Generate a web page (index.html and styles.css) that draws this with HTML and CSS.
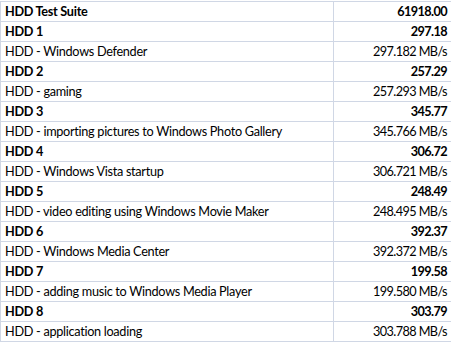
FILE: index.html
```html
<!DOCTYPE html>
<html>
<head>
<meta charset="utf-8">
<link rel="stylesheet" href="styles.css">
</head>
<body>
<div class="sheet">
  <div class="cell b">HDD Test Suite</div><div class="cell num b">61918.00</div>
  <div class="cell b">HDD 1</div><div class="cell num b">297.18</div>
  <div class="cell">HDD - Windows Defender</div><div class="cell num">297.182 MB/s</div>
  <div class="cell b">HDD 2</div><div class="cell num b">257.29</div>
  <div class="cell">HDD - gaming</div><div class="cell num">257.293 MB/s</div>
  <div class="cell b">HDD 3</div><div class="cell num b">345.77</div>
  <div class="cell">HDD - importing pictures to Windows Photo Gallery</div><div class="cell num">345.766 MB/s</div>
  <div class="cell b">HDD 4</div><div class="cell num b">306.72</div>
  <div class="cell">HDD - Windows Vista startup</div><div class="cell num">306.721 MB/s</div>
  <div class="cell b">HDD 5</div><div class="cell num b">248.49</div>
  <div class="cell">HDD - video editing using Windows Movie Maker</div><div class="cell num">248.495 MB/s</div>
  <div class="cell b">HDD 6</div><div class="cell num b">392.37</div>
  <div class="cell">HDD - Windows Media Center</div><div class="cell num">392.372 MB/s</div>
  <div class="cell b">HDD 7</div><div class="cell num b">199.58</div>
  <div class="cell">HDD - adding music to Windows Media Player</div><div class="cell num">199.580 MB/s</div>
  <div class="cell b">HDD 8</div><div class="cell num b">303.79</div>
  <div class="cell">HDD - application loading</div><div class="cell num">303.788 MB/s</div>
</div>
</body>
</html>
```
FILE: styles.css
```css
html, body {
  margin: 0;
  padding: 0;
  background: #ffffff;
}
body {
  padding-top: 1px;
  font-family: "Lato", "Liberation Sans", sans-serif;
  font-size: 12.7px;
  letter-spacing: -0.3px;
  color: #000000;
}
.sheet {
  display: grid;
  grid-template-columns: 333px 118px;
  grid-auto-rows: 20px;
  border-top: 1px solid #d0d7e5;
  border-left: 1px solid #d0d7e5;
  width: max-content;
}
.cell {
  box-sizing: border-box;
  border-right: 1px solid #d0d7e5;
  border-bottom: 1px solid #d0d7e5;
  padding: 0 4px 0 4px;
  line-height: 19px;
  white-space: nowrap;
  overflow: hidden;
}
.num {
  text-align: right;
  padding-right: 4px;
  letter-spacing: -0.6px;
}
.b {
  font-weight: bold;
}
```
